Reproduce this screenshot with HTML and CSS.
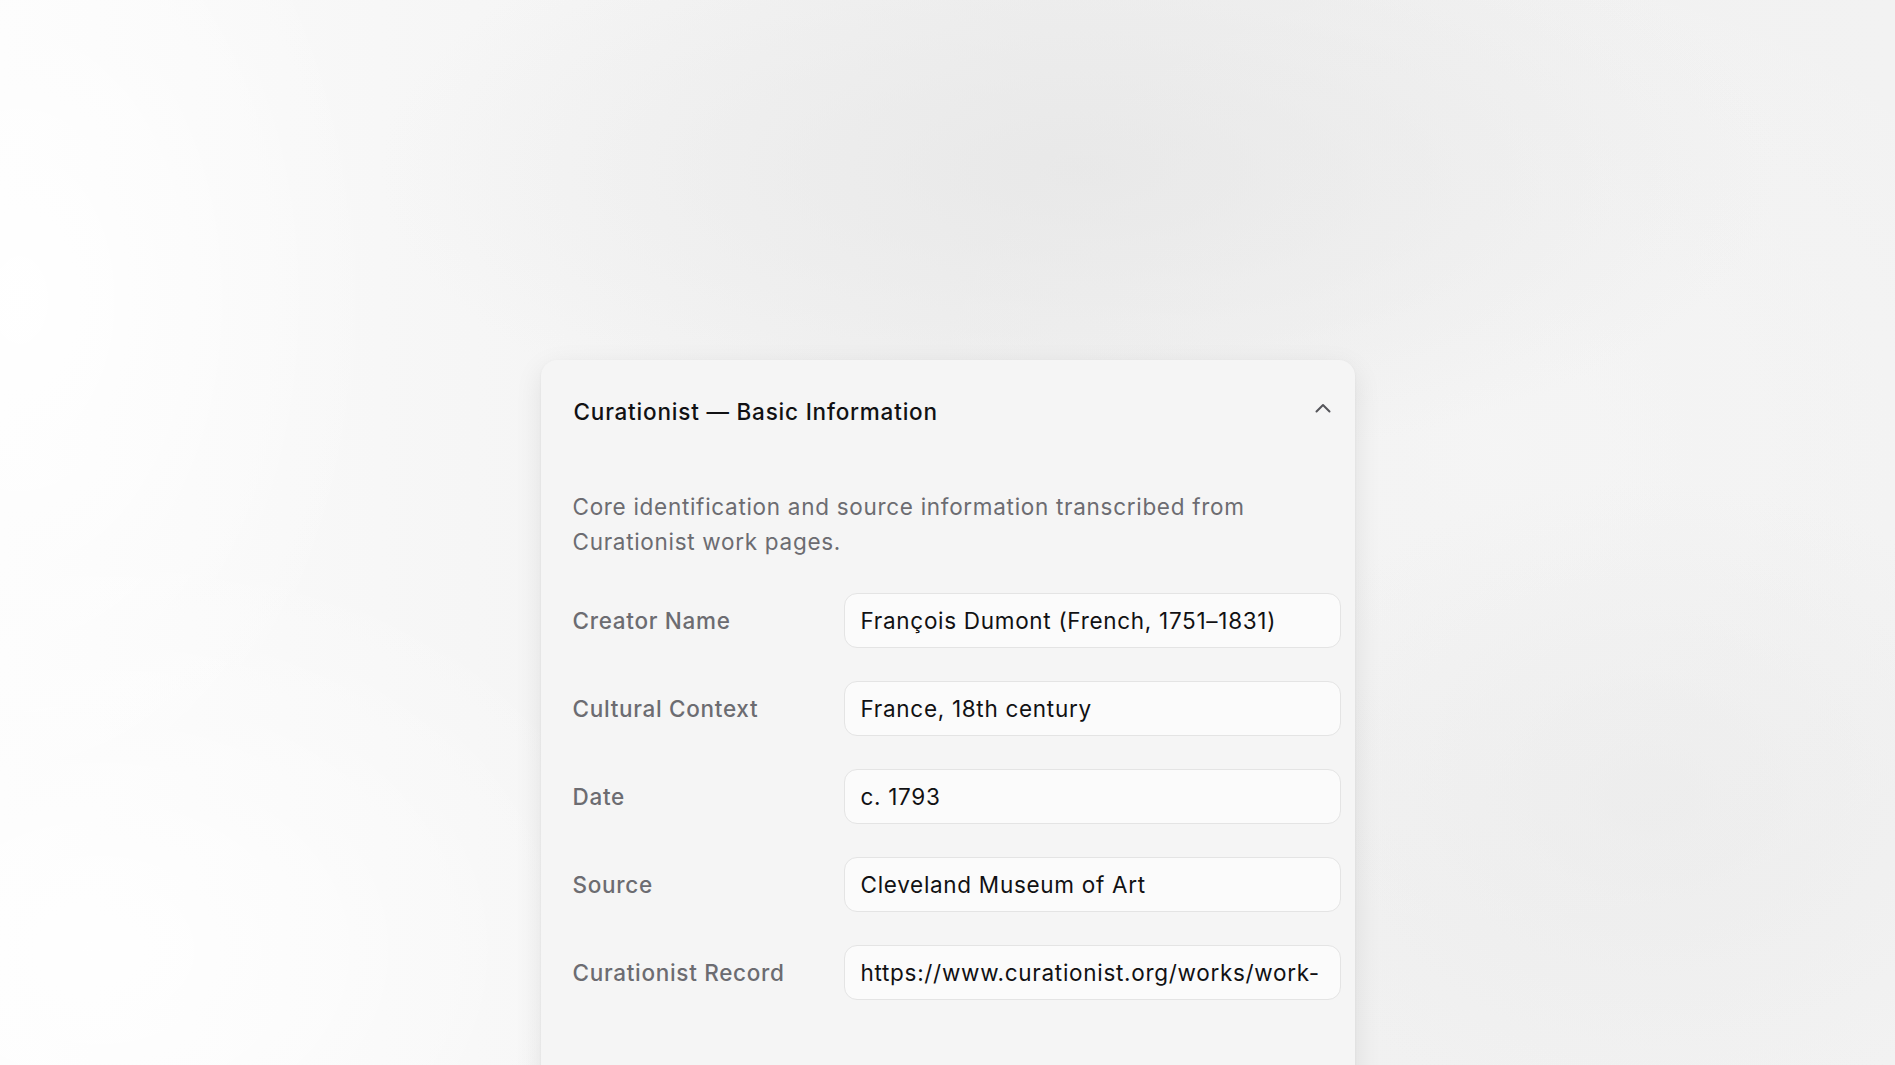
FILE: index.html
```html
<!DOCTYPE html>
<html lang="en">
<head>
<meta charset="utf-8">
<title>Curationist — Basic Information</title>
<link rel="stylesheet" href="styles.css">
</head>
<body>
<main class="stage">
  <section class="card">
    <header class="card-header">
      <h2 class="card-title">Curationist — Basic Information</h2>
      <button class="toggle" type="button" aria-label="Collapse">
        <svg width="22" height="22" viewBox="0 0 22 22" fill="none" stroke="#55555a" stroke-width="2" stroke-linecap="round" stroke-linejoin="round"><path d="M4.5 13.5 L11 7 L17.5 13.5"/></svg>
      </button>
    </header>
    <div class="card-body">
      <p class="desc">Core identification and source information transcribed from Curationist work pages.</p>
      <div class="fields">
        <div class="label">Creator Name</div>
        <div class="field">François Dumont (French, 1751–1831)</div>
        <div class="label">Cultural Context</div>
        <div class="field">France, 18th century</div>
        <div class="label">Date</div>
        <div class="field">c. 1793</div>
        <div class="label">Source</div>
        <div class="field">Cleveland Museum of Art</div>
        <div class="label">Curationist Record</div>
        <div class="field">https://www.curationist.org/works/work-</div>
      </div>
    </div>
  </section>
</main>
</body>
</html>
```
FILE: styles.css
```css
html, body {
  margin: 0;
  padding: 0;
  height: 100%;
  overflow: hidden;
}
body {
  font-family: Inter, "Noto Sans", "Liberation Sans", sans-serif;
  background-color: #f2f2f2;
  background-image:
    radial-gradient(ellipse 360px 560px at 20px 300px, rgba(255,255,255,0.95), rgba(255,255,255,0) 100%),
    radial-gradient(ellipse 560px 420px at 100px 950px, rgba(255,255,255,0.9), rgba(255,255,255,0) 100%),
    radial-gradient(ellipse 700px 300px at 1080px 170px, rgba(230,230,230,0.75), rgba(230,230,230,0) 100%),
    radial-gradient(ellipse 420px 320px at 1650px 800px, rgba(232,232,232,0.5), rgba(232,232,232,0) 100%),
    radial-gradient(ellipse 600px 500px at 1500px 450px, rgba(247,247,247,0.6), rgba(247,247,247,0) 100%),
    linear-gradient(90deg, #fbfbfb 0%, #f4f4f4 35%, #f0f0f0 55%, #f2f2f2 100%);
}
.stage {
  display: flex;
  justify-content: center;
  padding-top: 360px;
}
.card {
  width: 814px;
  height: 900px;
  box-sizing: border-box;
  background: #f5f5f5;
  border-radius: 16px;
  box-shadow: 0 8px 28px rgba(0,0,0,0.09), 0 1px 3px rgba(0,0,0,0.05);
}
.card-header {
  height: 103px;
  display: flex;
  align-items: center;
  justify-content: space-between;
  padding: 0 20px 0 33px;
}
.card-title {
  margin: 0;
  font-size: 22.5px;
  font-weight: 500;
  color: #111113;
  letter-spacing: 0.8px;
}
.toggle {
  border: 0;
  background: none;
  padding: 0;
  margin-top: -6px;
  width: 24px;
  height: 24px;
  display: flex;
  align-items: center;
  justify-content: center;
}
.card-body {
  padding: 26px 14px 0 32px;
}
.desc {
  margin: 0 0 34px;
  font-size: 22.5px;
  line-height: 35px;
  color: #6c6c71;
  letter-spacing: 0.7px;
}
.fields {
  display: grid;
  grid-template-columns: 271px 1fr;
  row-gap: 33px;
  align-items: center;
}
.label {
  font-size: 22.5px;
  font-weight: 500;
  color: #6c6c71;
  letter-spacing: 0.7px;
}
.field {
  height: 55px;
  box-sizing: border-box;
  display: flex;
  align-items: center;
  padding: 0 16px;
  background: #fbfbfb;
  border: 1.5px solid #e4e4e4;
  border-radius: 13px;
  font-size: 22.5px;
  color: #111113;
  letter-spacing: 0.7px;
  white-space: nowrap;
  overflow: hidden;
}
```
